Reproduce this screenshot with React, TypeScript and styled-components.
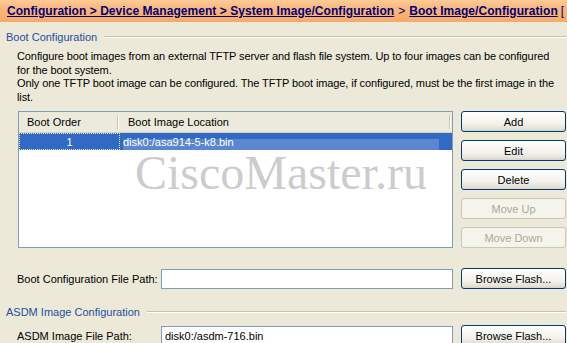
import React from "react";
import styled, { createGlobalStyle } from "styled-components";

const GlobalStyle = createGlobalStyle`
    html, body {
        margin: 0;
        padding: 0;
        background: #ece9d8;
        overflow: hidden;
    }
    body {
        font-family: "Liberation Sans", Arial, sans-serif;
        font-size: 11px;
        color: #000;
    }
`;

const Page = styled.div`
    position: relative;
    width: 567px;
    height: 343px;
    overflow: hidden;
    background: #ece9d8;
`;

const Breadcrumb = styled.div`
    height: 22px;
    display: flex;
    align-items: center;
    padding-left: 7px;
    white-space: nowrap;
    overflow: hidden;
    background: linear-gradient(#fccb98, #f9b77b 40%, #f7aa66);
    font-weight: bold;
    font-size: 12px;
    letter-spacing: 0.05px;
    color: #00007a;
`;

const Crumb = styled.span`
    text-decoration: underline;
`;

const Sep = styled.span<{ $pad: number }>`
    font-weight: normal;
    padding: 0 ${(p) => p.$pad}px;
`;

const Content = styled.div`
    padding: 0 1px 0 6px;
`;

const GroupTitle = styled.div<{ $top: number }>`
    display: flex;
    align-items: center;
    gap: 7px;
    height: 14px;
    margin-top: ${(p) => p.$top}px;
    color: #1f4ea3;

    &::after {
        content: "";
        flex: 1;
        height: 1px;
        background: #c5c2b2;
        border-bottom: 1px solid #fff;
    }
`;

const Description = styled.div`
    margin: 6px 0 0 11px;
    line-height: 13.6px;
    letter-spacing: -0.1px;
    white-space: nowrap;
`;

const ListArea = styled.div`
    display: flex;
    gap: 8px;
    margin: 7px 0 0 12px;
`;

const Table = styled.div`
    flex: 1;
    height: 135px;
    border: 1px solid #7f9db9;
    background: #fff;
`;

const HeaderRow = styled.div`
    display: flex;
    height: 20px;
    background: #ebeadb;
    border-bottom: 1px solid #d6d2c2;
`;

const HeaderCell = styled.div<{ $width?: number }>`
    display: flex;
    align-items: center;
    padding-left: 8px;
    ${(p) => (p.$width ? `width: ${p.$width}px;` : "flex: 1;")}
    box-sizing: border-box;
    height: 100%;
    position: relative;

    &::after {
        content: "";
        position: absolute;
        right: 1px;
        top: 3px;
        bottom: 3px;
        width: 1px;
        background: #c7c5b2;
        border-right: 1px solid #fff;
    }
`;

const DataRow = styled.div`
    display: flex;
    height: 17px;
    background: #316ac5;
    color: #fff;
`;

const DataCell = styled.div<{ $width?: number; $focused?: boolean }>`
    display: flex;
    align-items: center;
    box-sizing: border-box;
    ${(p) => (p.$width ? `width: ${p.$width}px;` : "flex: 1;")}
    justify-content: ${(p) => (p.$focused ? "center" : "flex-start")};
    padding-left: ${(p) => (p.$focused ? 0 : 3)}px;
    border: ${(p) => (p.$focused ? "1px dotted #e8e8e8" : "none")};
`;

const ButtonColumn = styled.div`
    display: flex;
    flex-direction: column;
    gap: 8px;
    width: 105px;
`;

const XpButton = styled.button`
    width: 105px;
    height: 21px;
    padding: 0;
    font-family: inherit;
    font-size: 11px;
    color: #000;
    border: 1px solid #003c74;
    border-radius: 3px;
    background: linear-gradient(#ffffff, #f3f2ec 60%, #e3e0d6 90%, #d6d0c5);
    cursor: pointer;

    &:disabled {
        color: #aca899;
        border-color: #c9c7ba;
        background: #f5f4ea;
        cursor: default;
    }
`;

const FieldRow = styled.div<{ $top: number }>`
    display: flex;
    align-items: center;
    margin: ${(p) => p.$top}px 0 0 11px;
`;

const FieldLabel = styled.label`
    width: 144px;
`;

const TextInput = styled.input`
    box-sizing: border-box;
    width: 292px;
    height: 20px;
    margin-right: 8px;
    padding: 0 3px;
    border: 1px solid #7f9db9;
    font-family: inherit;
    font-size: 11px;
    color: #000;
    background: #fff;
    outline: none;
`;

const Watermark = styled.div`
    position: absolute;
    left: 123px;
    top: 139px;
    width: 316px;
    height: 67px;
    background: rgba(255, 255, 255, 0.2);
    display: flex;
    justify-content: center;
    align-items: center;
    font-family: "Liberation Serif", "Times New Roman", serif;
    font-size: 48px;
    color: rgba(160, 160, 160, 0.55);
    pointer-events: none;
    white-space: nowrap;
`;

const App: React.FC = () => {
    return (
        <Page>
            <GlobalStyle />
            <Breadcrumb>
                <Crumb>Configuration &gt; Device Management &gt; System Image/Configuration</Crumb>
                <Sep $pad={4}>&gt;</Sep>
                <Crumb>Boot Image/Configuration</Crumb>
                <Sep $pad={3}>[</Sep>
            </Breadcrumb>
            <Content>
                <GroupTitle $top={8}>Boot Configuration</GroupTitle>
                <Description>
                    Configure boot images from an external TFTP server and flash file system. Up to four images can be configured
                    <br />
                    for the boot system.
                    <br />
                    Only one TFTP boot image can be configured. The TFTP boot image, if configured, must be the first image in the
                    <br />
                    list.
                </Description>
                <ListArea>
                    <Table>
                        <HeaderRow>
                            <HeaderCell $width={101}>Boot Order</HeaderCell>
                            <HeaderCell>Boot Image Location</HeaderCell>
                        </HeaderRow>
                        <DataRow>
                            <DataCell $width={101} $focused>1</DataCell>
                            <DataCell>disk0:/asa914-5-k8.bin</DataCell>
                        </DataRow>
                    </Table>
                    <ButtonColumn>
                        <XpButton>Add</XpButton>
                        <XpButton>Edit</XpButton>
                        <XpButton>Delete</XpButton>
                        <XpButton disabled>Move Up</XpButton>
                        <XpButton disabled>Move Down</XpButton>
                    </ButtonColumn>
                </ListArea>
                <FieldRow $top={20}>
                    <FieldLabel>Boot Configuration File Path:</FieldLabel>
                    <TextInput defaultValue="" />
                    <XpButton>Browse Flash...</XpButton>
                </FieldRow>
                <GroupTitle $top={16}>ASDM Image Configuration</GroupTitle>
                <FieldRow $top={6}>
                    <FieldLabel>ASDM Image File Path:</FieldLabel>
                    <TextInput defaultValue="disk0:/asdm-716.bin" />
                    <XpButton>Browse Flash...</XpButton>
                </FieldRow>
            </Content>
            <Watermark>CiscoMaster.ru</Watermark>
        </Page>
    );
};

export default App;
